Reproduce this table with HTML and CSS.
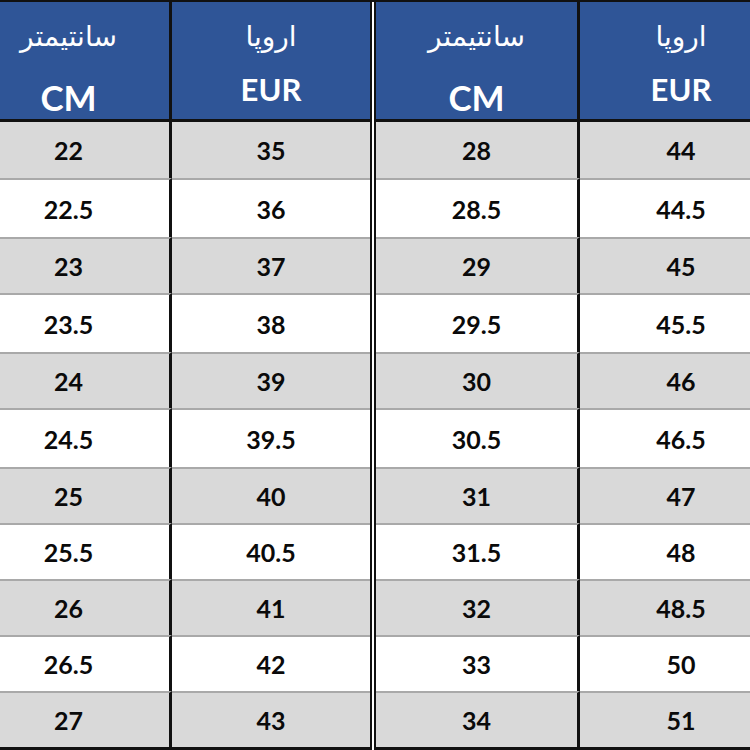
FILE: index.html
```html
<!DOCTYPE html>
<html lang="fa">
<head>
<meta charset="utf-8">
<title>جدول سایز</title>
<link rel="stylesheet" href="styles.css">
</head>
<body>
<div class="chart">
  <div class="cell head c1"><span class="fa">سانتیمتر</span><span class="en cm">CM</span></div>
  <div class="cell head c2"><span class="fa">اروپا</span><span class="en eur">EUR</span></div>
  <div class="divider"></div>
  <div class="cell head c1"><span class="fa">سانتیمتر</span><span class="en cm">CM</span></div>
  <div class="cell head c2"><span class="fa">اروپا</span><span class="en eur">EUR</span></div>

  <div class="cell g c1 first">22</div><div class="cell g c2 first">35</div><div class="cell g c1 first">28</div><div class="cell g c2 first">44</div>
  <div class="cell w c1">22.5</div><div class="cell w c2">36</div><div class="cell w c1">28.5</div><div class="cell w c2">44.5</div>
  <div class="cell g c1">23</div><div class="cell g c2">37</div><div class="cell g c1">29</div><div class="cell g c2">45</div>
  <div class="cell w c1">23.5</div><div class="cell w c2">38</div><div class="cell w c1">29.5</div><div class="cell w c2">45.5</div>
  <div class="cell g c1">24</div><div class="cell g c2">39</div><div class="cell g c1">30</div><div class="cell g c2">46</div>
  <div class="cell w c1">24.5</div><div class="cell w c2">39.5</div><div class="cell w c1">30.5</div><div class="cell w c2">46.5</div>
  <div class="cell g c1">25</div><div class="cell g c2">40</div><div class="cell g c1">31</div><div class="cell g c2">47</div>
  <div class="cell w c1">25.5</div><div class="cell w c2">40.5</div><div class="cell w c1">31.5</div><div class="cell w c2">48</div>
  <div class="cell g c1">26</div><div class="cell g c2">41</div><div class="cell g c1">32</div><div class="cell g c2">48.5</div>
  <div class="cell w c1">26.5</div><div class="cell w c2">42</div><div class="cell w c1">33</div><div class="cell w c2">50</div>
  <div class="cell g c1 last">27</div><div class="cell g c2 last">43</div><div class="cell g c1 last">34</div><div class="cell g c2 last">51</div>
</div>
</body>
</html>
```
FILE: styles.css
```css
html, body {
  margin: 0;
  padding: 0;
}
html {
  overflow: hidden;
}
body {
  width: 750px;
  height: 750px;
  overflow: hidden;
  background: #ffffff;
}
.chart {
  display: grid;
  margin-left: -32px;
  width: 814px;
  border-top: 2px solid #111111;
  grid-template-columns: 204px 198px 6px 204px 202px;
  grid-template-rows: 120px 56px 59px 56px 59px 56px 59px 56px 56px 56px 56px 59px;
  font-family: "Lato", "Liberation Sans", sans-serif;
  font-weight: 700;
  color: #0a0a0a;
}
.cell {
  box-sizing: border-box;
  display: flex;
  align-items: center;
  justify-content: center;
  font-size: 25px;
  border-top: 2px solid #a9a9a9;
}
.cell.c1 {
  border-right: 3px solid #111111;
}
.cell.first {
  border-top: none;
}
.cell.last {
  border-bottom: 3px solid #111111;
}
.g {
  background: #d9d9d9;
}
.w {
  background: #ffffff;
}
.head {
  background: #2f5597;
  color: #ffffff;
  border-top: none;
  border-bottom: 3px solid #111111;
  flex-direction: column;
  justify-content: flex-start;
  padding-top: 15px;
}
.fa {
  font-family: "DejaVu Sans", sans-serif;
  font-weight: 400;
  font-size: 28px;
  line-height: 40px;
  height: 40px;
}
.en {
  line-height: 40px;
  height: 40px;
}
.cm {
  font-size: 35px;
  margin-top: 20px;
}
.eur {
  font-size: 31px;
  margin-top: 12px;
}
.divider {
  grid-column: 3;
  grid-row: 1 / -1;
  box-sizing: border-box;
  background: #ffffff;
  border-left: 2px solid #111111;
  border-right: 2px solid #111111;
}
```
